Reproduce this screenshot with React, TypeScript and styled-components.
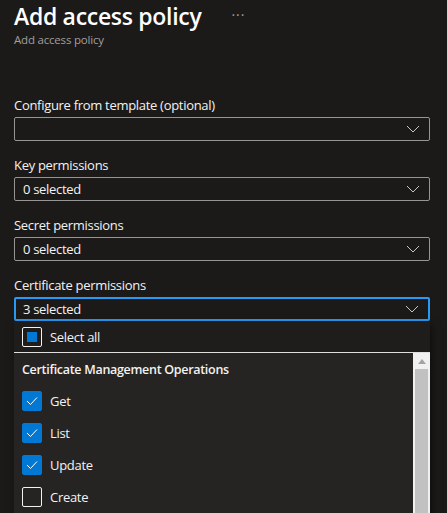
import * as React from 'react'
import styled, { createGlobalStyle } from 'styled-components'

const GlobalStyle = createGlobalStyle`
	html, body {
		margin: 0;
		padding: 0;
		background: #1b1a19;
	}
	body {
		font-family: "Open Sans", "Liberation Sans", sans-serif;
		color: #f3f2f1;
		overflow: hidden;
	}
`

const Page = styled.div`
	width: 447px;
	height: 513px;
	box-sizing: border-box;
	padding: 0 17px 0 14px;
	overflow: hidden;
`

const TitleRow = styled.div`
	display: flex;
	align-items: center;
	height: 32px;
	gap: 30px;
`

const Title = styled.h1`
	margin: 0;
	font-size: 23px;
	font-weight: 600;
	letter-spacing: -0.3px;
	line-height: 32px;
	color: #ffffff;
`

const More = styled.span`
	font-size: 14px;
	color: #a19f9d;
	letter-spacing: 1px;
	margin-top: -4px;
`

const Subtitle = styled.div`
	font-size: 11.5px;
	line-height: 16px;
	letter-spacing: -0.2px;
	color: #a19f9d;
`

const Form = styled.div`
	display: flex;
	flex-direction: column;
	gap: 14px;
	margin-top: 47px;
`

const Field = styled.div`
	display: flex;
	flex-direction: column;
`

const Label = styled.label`
	font-size: 13px;
	line-height: 20px;
	letter-spacing: -0.3px;
	margin-bottom: 2px;
	color: #f3f2f1;
`

const Box = styled.div<{ $focused?: boolean }>`
	display: flex;
	align-items: center;
	justify-content: space-between;
	box-sizing: border-box;
	height: 24px;
	padding: 0 9px 0 ${(p) => (p.$focused ? '7px' : '8px')};
	border: ${(p) => (p.$focused ? '2px solid #2899f5' : '1px solid #979593')};
	border-radius: 2px;
	font-size: 13px;
	letter-spacing: -0.3px;
	color: #f3f2f1;
`

const Chevron = () => (
	<svg width="14" height="8" viewBox="0 0 14 8" fill="none">
		<path d="M1 1 L7 7 L13 1" stroke="#c8c6c4" strokeWidth="1" />
	</svg>
)

const Dropdown = styled.div`
	display: flex;
	flex-direction: column;
	box-shadow: 2px 4px 8px rgba(0, 0, 0, 0.5);
`

const SelectAllRow = styled.div`
	display: flex;
	align-items: center;
	gap: 8px;
	height: 31px;
	padding-left: 8px;
	background: #1e1d1c;
	border-bottom: 1px solid #e1dfdd;
	font-size: 13px;
	letter-spacing: -0.3px;
`

const ListArea = styled.div`
	display: flex;
	height: 200px;
	background: #252423;
`

const List = styled.div`
	flex: 1;
	display: flex;
	flex-direction: column;
`

const GroupHeader = styled.div`
	display: flex;
	align-items: center;
	height: 32px;
	padding-left: 8px;
	font-size: 12.5px;
	font-weight: 600;
	letter-spacing: -0.3px;
	color: #f3f2f1;
`

const Option = styled.div`
	display: flex;
	align-items: center;
	gap: 8px;
	height: 32px;
	padding-left: 8px;
	font-size: 13px;
	letter-spacing: -0.3px;
`

const Check = styled.span<{ $checked?: boolean }>`
	display: flex;
	align-items: center;
	justify-content: center;
	box-sizing: border-box;
	width: 20px;
	height: 20px;
	border-radius: 2px;
	background: ${(p) => (p.$checked ? '#0078d4' : 'transparent')};
	border: 1px solid ${(p) => (p.$checked ? '#0078d4' : '#f3f2f1')};
`

const Indeterminate = styled.span`
	width: 10px;
	height: 10px;
	background: #0078d4;
`

const Scrollbar = styled.div`
	width: 17px;
	background: #f0f0f0;
	display: flex;
	flex-direction: column;
	align-items: center;
`

const ScrollArrow = styled.div`
	height: 16px;
	display: flex;
	align-items: center;
	justify-content: center;
`

const Thumb = styled.div`
	width: 13px;
	flex: 1;
	background: #c1c1c1;
`

const Tick = () => (
	<svg width="12" height="10" viewBox="0 0 12 10" fill="none">
		<path d="M1 5 L4.5 8.5 L11 1.5" stroke="#ffffff" strokeWidth="1" />
	</svg>
)

const options = [
	{ name: 'Get', checked: true },
	{ name: 'List', checked: true },
	{ name: 'Update', checked: true },
	{ name: 'Create', checked: false },
]

const fields = [
	{ label: 'Configure from template (optional)', value: '' },
	{ label: 'Key permissions', value: '0 selected' },
	{ label: 'Secret permissions', value: '0 selected' },
]

export default function App() {
	return (
		<>
			<GlobalStyle />
			<Page>
				<TitleRow>
					<Title>Add access policy</Title>
					<More>···</More>
				</TitleRow>
				<Subtitle>Add access policy</Subtitle>
				<Form>
					{fields.map((f) => (
						<Field key={f.label}>
							<Label>{f.label}</Label>
							<Box>
								<span>{f.value}</span>
								<Chevron />
							</Box>
						</Field>
					))}
					<Field>
						<Label>Certificate permissions</Label>
						<Box $focused>
							<span>3 selected</span>
							<Chevron />
						</Box>
						<Dropdown>
							<SelectAllRow>
								<Check>
									<Indeterminate />
								</Check>
								<span>Select all</span>
							</SelectAllRow>
							<ListArea>
								<List>
									<GroupHeader>Certificate Management Operations</GroupHeader>
									{options.map((o) => (
										<Option key={o.name}>
											<Check $checked={o.checked}>{o.checked && <Tick />}</Check>
											<span>{o.name}</span>
										</Option>
									))}
								</List>
								<Scrollbar>
									<ScrollArrow>
										<svg width="8" height="5" viewBox="0 0 8 5">
											<path d="M0 5 L4 0 L8 5 Z" fill="#a3a3a3" />
										</svg>
									</ScrollArrow>
									<Thumb />
								</Scrollbar>
							</ListArea>
						</Dropdown>
					</Field>
				</Form>
			</Page>
		</>
	)
}
